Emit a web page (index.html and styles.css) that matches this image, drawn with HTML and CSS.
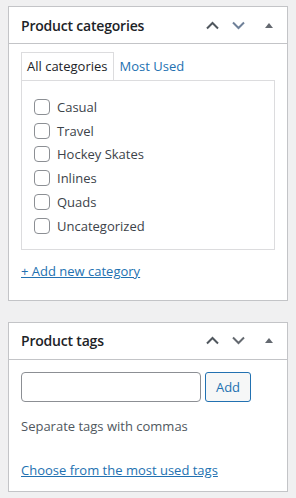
FILE: index.html
```html
<!DOCTYPE html>
<html lang="en">
<head>
  <meta charset="UTF-8" />
  <title>Product categories</title>
  <link rel="stylesheet" href="styles.css">
</head>
<body>

  <!-- Product categories box -->
  <div class="postbox">
    <div class="postbox-header">
      <h2>Product categories</h2>
      <div class="handle-actions">
        <span class="handle-btn">
          <svg width="13" height="9" viewBox="0 0 13 9"><polyline points="1,7.5 6.5,2 12,7.5" fill="none" stroke="#50575e" stroke-width="2"/></svg>
        </span>
        <span class="handle-btn">
          <svg width="13" height="9" viewBox="0 0 13 9"><polyline points="1,1.5 6.5,7 12,1.5" fill="none" stroke="#6f8199" stroke-width="2"/></svg>
        </span>
        <span class="toggle-btn">
          <svg width="8" height="5" viewBox="0 0 8 5"><polygon points="0,5 4,0 8,5" fill="#646970"/></svg>
        </span>
      </div>
    </div>
    <div class="inside">
      <ul class="tabs">
        <li class="tab active">All categories</li>
        <li class="tab">Most Used</li>
      </ul>
      <div class="tabs-panel">
        <ul class="checklist">
          <li><span class="checkbox"></span>Casual</li>
          <li><span class="checkbox"></span>Travel</li>
          <li><span class="checkbox"></span>Hockey Skates</li>
          <li><span class="checkbox"></span>Inlines</li>
          <li><span class="checkbox"></span>Quads</li>
          <li><span class="checkbox"></span>Uncategorized</li>
        </ul>
      </div>
      <a class="link add-link" href="#">+ Add new category</a>
    </div>
  </div>

  <!-- Product tags box -->
  <div class="postbox">
    <div class="postbox-header">
      <h2>Product tags</h2>
      <div class="handle-actions">
        <span class="handle-btn">
          <svg width="13" height="9" viewBox="0 0 13 9"><polyline points="1,7.5 6.5,2 12,7.5" fill="none" stroke="#50575e" stroke-width="2"/></svg>
        </span>
        <span class="handle-btn">
          <svg width="13" height="9" viewBox="0 0 13 9"><polyline points="1,1.5 6.5,7 12,1.5" fill="none" stroke="#646970" stroke-width="2"/></svg>
        </span>
        <span class="toggle-btn">
          <svg width="8" height="5" viewBox="0 0 8 5"><polygon points="0,5 4,0 8,5" fill="#646970"/></svg>
        </span>
      </div>
    </div>
    <div class="inside tags-inside">
      <div class="tag-row">
        <input type="text" class="tag-input" />
        <button class="tag-add">Add</button>
      </div>
      <p class="howto">Separate tags with commas</p>
      <a class="link" href="#">Choose from the most used tags</a>
    </div>
  </div>

</body>
</html>
```

FILE: styles.css
```css
body {
  background: #f0f0f1;
  font-family: 'Open Sans', 'Noto Sans', sans-serif;
  font-size: 13px;
  color: #3c434a;
  margin: 0;
  padding: 6px 8px 0;
}

.postbox {
  width: 278px;
  background: #fff;
  border: 1px solid #c3c4c7;
  margin-bottom: 21px;
}

.postbox-header {
  display: flex;
  align-items: center;
  height: 36px;
  border-bottom: 1px solid #c3c4c7;
  padding-left: 12px;
}

.postbox-header h2 {
  flex: 1;
  margin: 0;
  font-size: 14px;
  font-weight: 600;
  letter-spacing: -0.2px;
  color: #1d2327;
}

.handle-actions {
  display: flex;
  align-items: center;
  height: 100%;
}

.handle-btn, .toggle-btn {
  display: flex;
  align-items: center;
  justify-content: center;
  height: 100%;
}

.handle-btn {
  width: 26px;
}

.toggle-btn {
  width: 36px;
}

.inside {
  padding: 8px 12px 19px;
}

.tabs {
  display: flex;
  list-style: none;
  margin: 0;
  padding: 0;
}

.tab {
  padding: 0 5px;
  height: 27px;
  line-height: 26px;
  color: #2271b1;
  border: 1px solid transparent;
  border-bottom: none;
}

.tab.active {
  color: #1d2327;
  border-color: #dcdcde;
  margin-bottom: -1px;
  background: #fff;
  position: relative;
}

.tabs-panel {
  border: 1px solid #dcdcde;
  padding: 14px 12px 11px;
}

.checklist {
  list-style: none;
  margin: 0;
  padding: 0;
}

.checklist li {
  display: flex;
  align-items: center;
  height: 23.8px;
}

.checkbox {
  width: 14px;
  height: 14px;
  border: 1px solid #8c8f94;
  border-radius: 4px;
  margin-right: 7px;
  background: #fff;
}

.link {
  color: #2271b1;
  text-decoration: underline;
}

.add-link {
  display: block;
  margin-top: 11px;
  line-height: 20px;
}

.tags-inside {
  padding: 12px 12px 12px;
}

.tag-row {
  display: flex;
}

.tag-input {
  width: 180px;
  height: 30px;
  box-sizing: border-box;
  border: 1px solid #8c8f94;
  border-radius: 4px;
  margin: 0 4px 0 0;
}

.tag-add {
  width: 46px;
  height: 30px;
  border: 1px solid #2271b1;
  border-radius: 3px;
  background: #f6f7f7;
  color: #2271b1;
  font-family: inherit;
  font-size: 13px;
  padding: 0;
}

.howto {
  margin: 14px 0 25px;
  color: #50575e;
  line-height: 20px;
}
```
